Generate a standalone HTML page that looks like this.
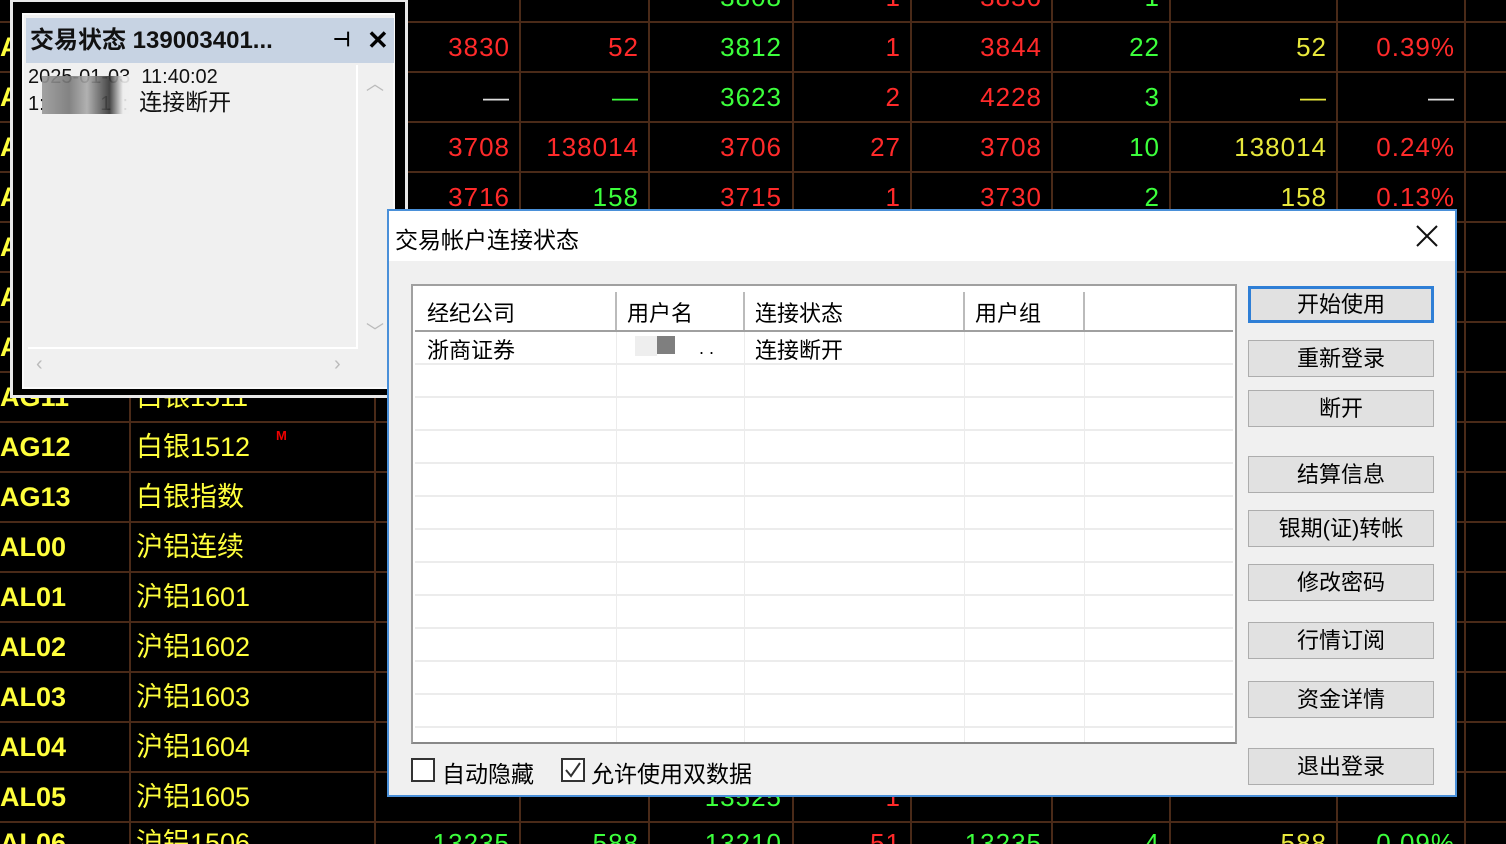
<!DOCTYPE html>
<html><head><meta charset="utf-8">
<style>
*{margin:0;padding:0;box-sizing:border-box}
html,body{width:1506px;height:844px;overflow:hidden}
body{background:#000;position:relative;font-family:"Liberation Sans","Noto Sans CJK SC",sans-serif}
.h{position:absolute;left:0;width:1506px;height:2px;background:#4a2a18}
.v{position:absolute;top:0;width:2px;height:844px;background:#4a2a18}
.c{position:absolute;height:50px;line-height:50px;font-size:26px;text-align:right;padding-right:10px;letter-spacing:1px}
.t{position:absolute;height:50px;line-height:50px;font-size:27px;color:#ffff3c;font-weight:bold}
.r{color:#ff2a2a}.g{color:#3cff3c}.y{color:#e8e83c}.w{color:#ddd}
.btn{position:absolute;left:1248px;width:186px;height:37px;background:#e1e1e1;border:1px solid #adadad;font-size:22px;text-align:center;line-height:35px;color:#000}
</style></head><body>
<div class="h" style="top:21px"></div><div class="h" style="top:71px"></div><div class="h" style="top:121px"></div><div class="h" style="top:171px"></div><div class="h" style="top:221px"></div><div class="h" style="top:271px"></div><div class="h" style="top:321px"></div><div class="h" style="top:371px"></div><div class="h" style="top:421px"></div><div class="h" style="top:471px"></div><div class="h" style="top:521px"></div><div class="h" style="top:571px"></div><div class="h" style="top:621px"></div><div class="h" style="top:671px"></div><div class="h" style="top:721px"></div><div class="h" style="top:771px"></div><div class="h" style="top:821px"></div>
<div class="v" style="left:129px"></div><div class="v" style="left:374px"></div><div class="v" style="left:519px"></div><div class="v" style="left:648px"></div><div class="v" style="left:792px"></div><div class="v" style="left:910px"></div><div class="v" style="left:1051px"></div><div class="v" style="left:1169px"></div><div class="v" style="left:1336px"></div><div class="v" style="left:1464px"></div>

<div class="c g" style="top:-28px;left:650px;width:142px">3808</div>
<div class="c r" style="top:-28px;left:793px;width:118px">1</div>
<div class="c r" style="top:-28px;left:912px;width:140px">3836</div>
<div class="c g" style="top:-28px;left:1053px;width:117px">1</div>
<div class="c r" style="top:22px;left:376px;width:144px">3830</div>
<div class="c r" style="top:22px;left:521px;width:128px">52</div>
<div class="c g" style="top:22px;left:650px;width:142px">3812</div>
<div class="c r" style="top:22px;left:793px;width:118px">1</div>
<div class="c r" style="top:22px;left:912px;width:140px">3844</div>
<div class="c g" style="top:22px;left:1053px;width:117px">22</div>
<div class="c y" style="top:22px;left:1171px;width:166px">52</div>
<div class="c r" style="top:22px;left:1338px;width:127px">0.39%</div>
<div class="c w" style="top:72px;left:376px;width:144px">—</div>
<div class="c g" style="top:72px;left:521px;width:128px">—</div>
<div class="c g" style="top:72px;left:650px;width:142px">3623</div>
<div class="c r" style="top:72px;left:793px;width:118px">2</div>
<div class="c r" style="top:72px;left:912px;width:140px">4228</div>
<div class="c g" style="top:72px;left:1053px;width:117px">3</div>
<div class="c y" style="top:72px;left:1171px;width:166px">—</div>
<div class="c w" style="top:72px;left:1338px;width:127px">—</div>
<div class="c r" style="top:122px;left:376px;width:144px">3708</div>
<div class="c r" style="top:122px;left:521px;width:128px">138014</div>
<div class="c r" style="top:122px;left:650px;width:142px">3706</div>
<div class="c r" style="top:122px;left:793px;width:118px">27</div>
<div class="c r" style="top:122px;left:912px;width:140px">3708</div>
<div class="c g" style="top:122px;left:1053px;width:117px">10</div>
<div class="c y" style="top:122px;left:1171px;width:166px">138014</div>
<div class="c r" style="top:122px;left:1338px;width:127px">0.24%</div>
<div class="c r" style="top:172px;left:376px;width:144px">3716</div>
<div class="c g" style="top:172px;left:521px;width:128px">158</div>
<div class="c r" style="top:172px;left:650px;width:142px">3715</div>
<div class="c r" style="top:172px;left:793px;width:118px">1</div>
<div class="c r" style="top:172px;left:912px;width:140px">3730</div>
<div class="c g" style="top:172px;left:1053px;width:117px">2</div>
<div class="c y" style="top:172px;left:1171px;width:166px">158</div>
<div class="c r" style="top:172px;left:1338px;width:127px">0.13%</div>
<div class="t" style="top:22px;left:0">A</div><div class="t" style="top:72px;left:0">A</div><div class="t" style="top:122px;left:0">A</div><div class="t" style="top:172px;left:0">A</div><div class="t" style="top:222px;left:0">A</div><div class="t" style="top:272px;left:0">A</div><div class="t" style="top:322px;left:0">A</div>
<div class="t" style="top:372px;left:0">AG11</div><div class="t" style="top:372px;left:136px;font-weight:normal">白银1511</div>
<div class="t" style="top:422px;left:0">AG12</div><div class="t" style="top:422px;left:136px;font-weight:normal">白银1512</div><div style="position:absolute;top:428px;left:276px;color:#e00;font-size:13px;font-weight:bold">M</div>
<div class="t" style="top:472px;left:0">AG13</div><div class="t" style="top:472px;left:136px;font-weight:normal">白银指数</div>
<div class="t" style="top:522px;left:0">AL00</div><div class="t" style="top:522px;left:136px;font-weight:normal">沪铝连续</div>
<div class="t" style="top:572px;left:0">AL01</div><div class="t" style="top:572px;left:136px;font-weight:normal">沪铝1601</div>
<div class="t" style="top:622px;left:0">AL02</div><div class="t" style="top:622px;left:136px;font-weight:normal">沪铝1602</div>
<div class="t" style="top:672px;left:0">AL03</div><div class="t" style="top:672px;left:136px;font-weight:normal">沪铝1603</div>
<div class="t" style="top:722px;left:0">AL04</div><div class="t" style="top:722px;left:136px;font-weight:normal">沪铝1604</div>
<div class="t" style="top:772px;left:0">AL05</div><div class="t" style="top:772px;left:136px;font-weight:normal">沪铝1605</div>
<div class="t" style="top:818px;left:0">AL06</div><div class="t" style="top:818px;left:136px;font-weight:normal">沪铝1506</div>
<div class="c g" style="top:772px;left:650px;width:142px">13525</div>
<div class="c r" style="top:772px;left:793px;width:118px">1</div>
<div class="c g" style="top:818px;left:376px;width:144px">13235</div>
<div class="c g" style="top:818px;left:521px;width:128px">588</div>
<div class="c g" style="top:818px;left:650px;width:142px">13210</div>
<div class="c r" style="top:818px;left:793px;width:118px">51</div>
<div class="c g" style="top:818px;left:912px;width:140px">13235</div>
<div class="c g" style="top:818px;left:1053px;width:117px">4</div>
<div class="c y" style="top:818px;left:1171px;width:166px">588</div>
<div class="c g" style="top:818px;left:1338px;width:127px">0.09%</div>

<!-- small window -->
<div style="position:absolute;left:10px;top:0;width:398px;height:398px;border:3px solid #e8e8e8;border-top:2px solid #e8e8e8;background:#000"></div>
<div style="position:absolute;left:22px;top:13px;width:373px;height:376px;background:#f0f0f0;border:2px solid #fafafa"></div>
<div style="position:absolute;left:26px;top:18px;width:368px;height:45px;background:#c7d3e3"></div>
<div style="position:absolute;left:30px;top:18px;height:45px;line-height:45px;font-size:24px;font-weight:bold;color:#111">交易状态 139003401...</div>
<div style="position:absolute;left:333px;top:18px;height:45px;line-height:45px;font-size:20px;font-weight:bold">⊣</div>
<div style="position:absolute;left:367px;top:18px;height:45px;line-height:45px;font-size:26px;font-weight:bold">✕</div>
<div style="position:absolute;left:28px;top:65px;width:330px;height:284px;background:#f0f0f0;border-right:2px solid #fff;border-bottom:2px solid #fff"></div>
<div style="position:absolute;left:28px;top:65px;font-size:20px;line-height:25px;color:#111;white-space:pre">2025-01-03  11:40:02</div>
<div style="position:absolute;left:28px;top:89px;font-size:20px;line-height:26px;color:#111;white-space:pre">1:          1  :  <span style="font-size:23px">连接断开</span></div>
<div style="position:absolute;left:42px;top:76px;width:90px;height:38px;background:linear-gradient(90deg,#999 0,#777 30%,#aaa 50%,#333 75%,#eee 90%,#f0f0f0);opacity:.9"></div>
<div style="position:absolute;left:366px;top:70px;color:#bbb;font-size:18px">︿</div>
<div style="position:absolute;left:366px;top:318px;color:#bbb;font-size:18px">﹀</div>
<div style="position:absolute;left:36px;top:353px;color:#bbb;font-size:20px">‹</div>
<div style="position:absolute;left:334px;top:353px;color:#bbb;font-size:20px">›</div>

<!-- dialog -->
<div style="position:absolute;left:387px;top:209px;width:1070px;height:588px;background:#f0f0f0;border:2px solid #4a90d9">
 <div style="position:absolute;left:0;top:0;width:1066px;height:50px;background:#fff"></div>
 <div style="position:absolute;left:6px;top:10px;font-size:23px;color:#000">交易帐户连接状态</div>
 <svg style="position:absolute;left:1027px;top:14px" width="22" height="22"><path d="M1 1L21 21M21 1L1 21" stroke="#111" stroke-width="2"/></svg>
 <div style="position:absolute;left:22px;top:73px;width:826px;height:460px;background:#fff;border:2px solid #a0a0a0;border-bottom-color:#888">
  <div style="position:absolute;left:2px;top:46px;width:818px;height:410px;background:repeating-linear-gradient(180deg,transparent 0,transparent 31px,#ececec 31px,#ececec 33px)"></div>
  <div style="position:absolute;left:203px;top:46px;width:1px;height:410px;background:#ececec"></div>
  <div style="position:absolute;left:331px;top:46px;width:1px;height:410px;background:#ececec"></div>
  <div style="position:absolute;left:551px;top:46px;width:1px;height:410px;background:#ececec"></div>
  <div style="position:absolute;left:671px;top:46px;width:1px;height:410px;background:#ececec"></div>
  <div style="position:absolute;left:2px;top:4px;width:818px;height:42px;border-bottom:2px solid #a0a0a0"></div>
  <div style="position:absolute;left:202px;top:6px;width:2px;height:38px;background:#bbb"></div>
  <div style="position:absolute;left:330px;top:6px;width:2px;height:38px;background:#bbb"></div>
  <div style="position:absolute;left:550px;top:6px;width:2px;height:38px;background:#bbb"></div>
  <div style="position:absolute;left:670px;top:6px;width:2px;height:38px;background:#bbb"></div>
  <div style="position:absolute;left:14px;top:10px;font-size:22px">经纪公司</div>
  <div style="position:absolute;left:214px;top:10px;font-size:22px">用户名</div>
  <div style="position:absolute;left:342px;top:10px;font-size:22px">连接状态</div>
  <div style="position:absolute;left:562px;top:10px;font-size:22px">用户组</div>
  <div style="position:absolute;left:14px;top:50px;font-size:22px;line-height:30px">浙商证券</div>
  <div style="position:absolute;left:342px;top:50px;font-size:22px;line-height:30px">连接断开</div>
  <div style="position:absolute;left:222px;top:50px;width:22px;height:20px;background:#eee"></div>
  <div style="position:absolute;left:244px;top:50px;width:18px;height:18px;background:#7f7f7f"></div>
  <div style="position:absolute;left:286px;top:52px;font-size:18px">. .</div>
 </div>
 <div style="position:absolute;left:22px;top:547px;width:24px;height:24px;border:2px solid #333;background:#fff"></div>
 <div style="position:absolute;left:53px;top:544px;font-size:23px">自动隐藏</div>
 <div style="position:absolute;left:172px;top:547px;width:24px;height:24px;border:2px solid #333;background:#fff"></div>
 <svg style="position:absolute;left:174px;top:549px" width="20" height="20"><path d="M3 10L8 16L17 3" stroke="#333" stroke-width="2" fill="none"/></svg>
 <div style="position:absolute;left:202px;top:544px;font-size:23px">允许使用双数据</div>
</div>
<div class="btn" style="top:286px;border:3px solid #2f7fd6;line-height:31px">开始使用</div>
<div class="btn" style="top:340px">重新登录</div>
<div class="btn" style="top:390px">断开</div>
<div class="btn" style="top:456px">结算信息</div>
<div class="btn" style="top:510px">银期(证)转帐</div>
<div class="btn" style="top:564px">修改密码</div>
<div class="btn" style="top:622px">行情订阅</div>
<div class="btn" style="top:681px">资金详情</div>
<div class="btn" style="top:748px">退出登录</div>
</body></html>
